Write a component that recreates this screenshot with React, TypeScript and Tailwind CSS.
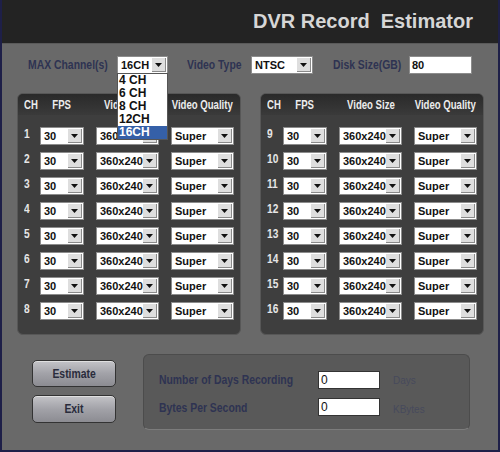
import React from 'react';

const field = "whitespace-nowrap font-['Liberation_Sans',Arial,sans-serif]";

// the labels in this window use a tall condensed face; squeeze Liberation Sans to match
const Narrow: React.FC<{ children: React.ReactNode; className?: string }> = ({ children, className = '' }) => (
    <span className={`inline-block whitespace-nowrap font-['Liberation_Sans',Arial,sans-serif] ${className}`}>{children}</span>
);

interface SelectProps {
    value: string;
    width: string;
    children?: React.ReactNode;
}

const Arrow = () => (
    <span className="my-[1px] mr-[1px] flex w-[14px] items-center justify-center border-r border-b border-[#8a8a8a] bg-[#dedede]">
        <svg width="7" height="4" viewBox="0 0 7 4">
            <path d="M0 0h7L3.5 4z" fill="#111" />
        </svg>
    </span>
);

const Select: React.FC<SelectProps> = ({ value, width, children }) => (
    <div className={`relative flex h-[18px] items-stretch border border-[#8c8c8c] bg-white ${width}`}>
        <span className={`flex-1 overflow-hidden pl-[3px] text-[11px] leading-[16px] font-bold text-[#111] ${field}`}>{value}</span>
        <Arrow />
        {children}
    </div>
);

const channelOptions = ['4 CH', '6 CH', '8 CH', '12CH', '16CH'];

const ChannelPanel: React.FC<{ channels: number[] }> = ({ channels }) => (
    <div className="flex h-[242px] w-[224px] flex-col overflow-hidden rounded-[6px] border border-[#575757] bg-[#3e3e3e]">
        {/* header band */}
        <div className="flex h-[21px] items-center bg-gradient-to-b from-[#2a2a2a] to-[#3a3a3a] pl-[6px] text-[12px] font-bold text-[#ececec]">
            <span className="w-[16px]">
                <Narrow className="origin-left scale-x-[0.8]">CH</Narrow>
            </span>
            <span className="flex w-[44px] justify-center">
                <Narrow className="scale-x-[0.8]">FPS</Narrow>
            </span>
            <span className="ml-[12px] flex w-[63px] justify-center">
                <Narrow className="scale-x-[0.8]">Video Size</Narrow>
            </span>
            <span className="ml-[12px] flex w-[63px] justify-center">
                <Narrow className="scale-x-[0.8]">Video Quality</Narrow>
            </span>
        </div>
        <div className="flex flex-col gap-[7px] pt-[12px] pl-[6px]">
            {channels.map((ch) => (
                <div key={ch} className="flex items-center">
                    <span className="w-[16px] -translate-y-[2px] text-[12px] font-bold text-[#e6e6e6]">
                        <Narrow className="origin-left scale-x-[0.85]">{ch}</Narrow>
                    </span>
                    <Select value="30" width="w-[44px]" />
                    <div className="ml-[12px]">
                        <Select value="360x240" width="w-[63px]" />
                    </div>
                    <div className="ml-[12px]">
                        <Select value="Super" width="w-[63px]" />
                    </div>
                </div>
            ))}
        </div>
    </div>
);

export default function App() {
    return (
        <div className="flex h-[452px] w-[500px] flex-col border-x-2 border-b-2 border-[#1e1f48] bg-[#696969]">
            {/* title bar */}
            <div className="flex h-[44px] items-center justify-end border-b border-[#5a5a5a] bg-[#232323] pr-[25px]">
                <h1 className={`pb-[2px] text-[20px] font-bold whitespace-pre text-[#d6d6d6] ${field}`}>DVR Record  Estimator</h1>
            </div>

            {/* settings row */}
            <div className="mt-[12px] flex h-[18px] items-center pl-[26px] text-[13px] font-bold text-[#2e3352]">
                <span className="w-[89px]">
                    <Narrow className="origin-left scale-x-[0.8]">MAX Channel(s)</Narrow>
                </span>
                <Select value="16CH" width="w-[51px]">
                    <div className="absolute top-full left-[-1px] z-10 flex w-[51px] flex-col border border-[#555] bg-white">
                        {channelOptions.map((opt) => (
                            <span
                                key={opt}
                                className={`h-[13px] pl-[1px] text-[12px] leading-[13px] font-bold ${field} ${opt === '16CH' ? 'bg-[#3560a8] text-white' : 'text-[#111]'}`}
                            >
                                {opt}
                            </span>
                        ))}
                    </div>
                </Select>
                <span className="ml-[19px] w-[64px]">
                    <Narrow className="origin-left scale-x-[0.8]">Video Type</Narrow>
                </span>
                <Select value="NTSC" width="w-[62px]" />
                <span className="ml-[20px] w-[76px]">
                    <Narrow className="origin-left scale-x-[0.8]">Disk Size(GB)</Narrow>
                </span>
                <div className={`h-[18px] w-[63px] border border-[#8c8c8c] bg-white pl-[2px] text-[11px] leading-[16px] font-bold text-[#111] ${field}`}>80</div>
            </div>

            {/* channel panels */}
            <div className="mt-[19px] flex gap-[19px] pl-[15px]">
                <ChannelPanel channels={[1, 2, 3, 4, 5, 6, 7, 8]} />
                <ChannelPanel channels={[9, 10, 11, 12, 13, 14, 15, 16]} />
            </div>

            {/* bottom area */}
            <div className="mt-[19px] flex pl-[30px]">
                <div className="mt-[6px] flex flex-col gap-[8px] text-[13px] font-bold text-[#2a2c3c]">
                    <button className="flex h-[27px] w-[84px] items-center justify-center rounded-[5px] border border-[#333] bg-gradient-to-b from-[#c4c4c8] via-[#a2a2a8] to-[#8c8c92] shadow-[inset_0_1px_0_#e0e0e0]">
                        <Narrow className="scale-x-[0.8]">Estimate</Narrow>
                    </button>
                    <button className="flex h-[28px] w-[84px] items-center justify-center rounded-[5px] border border-[#333] bg-gradient-to-b from-[#c4c4c8] via-[#a2a2a8] to-[#8c8c92] shadow-[inset_0_1px_0_#e0e0e0]">
                        <Narrow className="scale-x-[0.8]">Exit</Narrow>
                    </button>
                </div>
                <div className="ml-[27px] flex h-[76px] w-[327px] flex-col gap-[8px] rounded-[6px] border border-[#4c4c4c] border-b-[#7c7c7c] bg-[#595959] pt-[15px] pl-[15px]">
                    <div className="flex items-center">
                        <span className="w-[159px] text-[13px] font-bold text-[#2e3352]">
                            <Narrow className="origin-left scale-x-[0.8]">Number of Days Recording</Narrow>
                        </span>
                        <div className={`h-[18px] w-[62px] border border-[#333] bg-white pl-[2px] text-[12px] leading-[16px] text-[#111] ${field}`}>0</div>
                        <span className={`ml-[13px] pt-[2px] text-[10px] text-[#474a5c] ${field}`}>Days</span>
                    </div>
                    <div className="flex items-center">
                        <span className="w-[159px] text-[13px] font-bold text-[#2e3352]">
                            <Narrow className="origin-left scale-x-[0.8]">Bytes Per Second</Narrow>
                        </span>
                        <div className={`h-[18px] w-[62px] border border-[#333] bg-white pl-[2px] text-[12px] leading-[16px] text-[#111] ${field}`}>0</div>
                        <span className={`ml-[13px] pt-[4px] text-[10px] text-[#474a5c] ${field}`}>KBytes</span>
                    </div>
                </div>
            </div>
        </div>
    );
}
